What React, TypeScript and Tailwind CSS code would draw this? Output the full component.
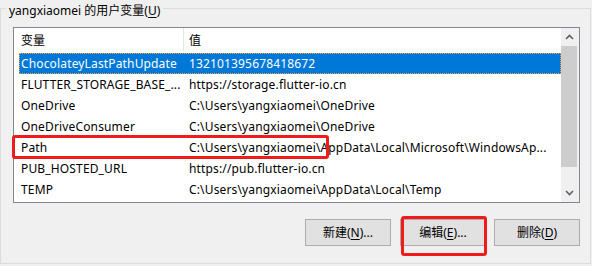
import React from "react";

const rows: [string, string][] = [
  ["ChocolateyLastPathUpdate", "132101395678418672"],
  ["FLUTTER_STORAGE_BASE_...", "https://storage.flutter-io.cn"],
  ["OneDrive", "C:\\Users\\yangxiaomei\\OneDrive"],
  ["OneDriveConsumer", "C:\\Users\\yangxiaomei\\OneDrive"],
  ["Path", "C:\\Users\\yangxiaomei\\AppData\\Local\\Microsoft\\WindowsAp..."],
  ["PUB_HOSTED_URL", "https://pub.flutter-io.cn"],
  ["TEMP", "C:\\Users\\yangxiaomei\\AppData\\Local\\Temp"],
];

function Chevron({ up }: { up?: boolean }) {
  return (
    <svg width="9" height="6" viewBox="0 0 9 6" className="block">
      <polyline
        points={up ? "1,5 4.5,1.5 8,5" : "1,1 4.5,4.5 8,1"}
        fill="none"
        stroke="#606060"
        strokeWidth="1.6"
      />
    </svg>
  );
}

function Button({
  label,
  k,
  dots,
  className,
}: {
  label: string;
  k: string;
  dots?: boolean;
  className?: string;
}) {
  return (
    <div
      className={
        "w-[86px] h-[27px] bg-[#e1e1e1] border border-[#adadad] flex items-center justify-center leading-[16px] " +
        (className ?? "")
      }
    >
      <span>
        {label}(<span className="underline underline-offset-2">{k}</span>){dots ? "..." : ""}
      </span>
    </div>
  );
}

export default function App() {
  return (
    <div className="relative w-[592px] h-[266px] overflow-hidden bg-[#f0f0f0] pt-[8px] text-[12px] text-black font-['Noto_Sans','Noto_Sans_CJK_SC',sans-serif]">
      <div className="w-[591px] h-[256px] border border-[#dcdcdc]">
        <div className="-mt-[6px] ml-[5px] h-[16px] w-fit px-[3px] bg-[#f0f0f0] leading-[16px] whitespace-nowrap">
          yangxiaomei 的用户变量(<span className="underline underline-offset-2">U</span>)
        </div>
        <div className="mt-[8px] ml-[12px] w-[567px] h-[176px] border border-[#828790] bg-white flex">
          <div className="w-[547px] h-full overflow-hidden">
            <div className="h-[25px] flex items-center leading-[16px]">
              <div className="w-[169px] pl-[7px]">变量</div>
              <div className="w-px h-[23px] self-start bg-[#e5e5e5]" />
              <div className="pl-[5px]">值</div>
            </div>
            {rows.map(([n, v], i) => (
              <div
                key={n}
                className={
                  "ml-[5px] h-[21px] flex items-center leading-[16px] whitespace-nowrap tracking-[0.15px] " +
                  (i === 0 ? "bg-[#0078d7] text-white border border-dotted border-[#f3a13c]" : "")
                }
              >
                <div className={"w-[170px] " + (i === 0 ? "pl-[1px]" : "pl-[2px]")}>{n}</div>
                <div className={i === 0 ? "-ml-px" : ""}>{v}</div>
              </div>
            ))}
          </div>
          <div className="w-[18px] h-full bg-[#f0f0f0] flex flex-col">
            <div className="w-[16px] h-[18px] flex items-center justify-center">
              <Chevron up />
            </div>
            <div className="w-[16px] h-[121px] bg-[#cdcdcd]" />
            <div className="flex-1" />
            <div className="w-[16px] h-[18px] flex items-center justify-center">
              <Chevron />
            </div>
          </div>
        </div>
        <div className="mt-[16px] ml-[12px] w-[567px] flex justify-end">
          <Button label="新建" k="N" dots />
          <Button label="编辑" k="E" dots className="ml-[9px]" />
          <Button label="删除" k="D" className="ml-[8px]" />
        </div>
      </div>
      <div className="absolute left-[12px] top-[135px] w-[317px] h-[24px] border-[3px] border-[#f01c1c] rounded-[3px]" />
      <div className="absolute left-[401px] top-[216px] w-[86px] h-[40px] border-[3px] border-[#f01c1c] rounded-[3px]" />
    </div>
  );
}
